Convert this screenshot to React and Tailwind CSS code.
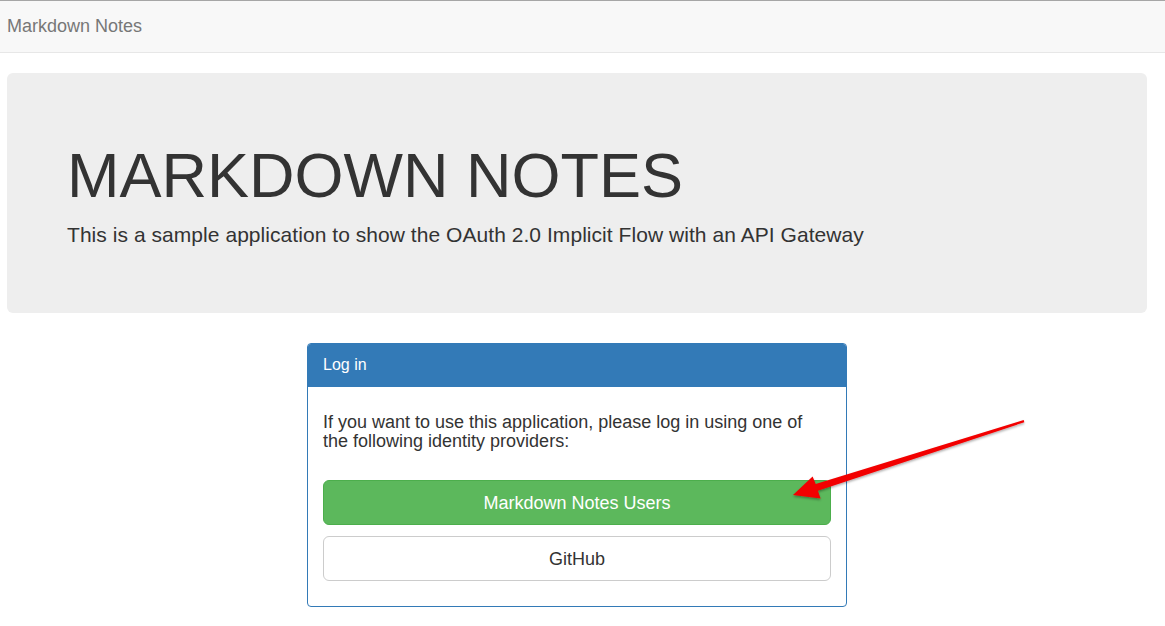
export default function App() {
  return (
    <div
      className="relative w-[1165px] h-[626px] bg-white overflow-hidden text-[#333]"
      style={{ fontFamily: '"Liberation Sans", Arial, sans-serif' }}
    >
      <div className="border-t border-b border-t-[#a6a6a6] border-b-[#e7e7e7] bg-[#f8f8f8] h-[53px]">
        <div className="pl-[7px] pt-[15px] text-[18px] leading-[20px] text-[#777]">Markdown Notes</div>
      </div>

      <div className="ml-[7px] w-[1140px] mt-[20px]">
        <div className="bg-[#eeeeee] rounded-[6px] pt-[48px] pb-[48px] px-[60px]">
          <h1 className="mt-[20px] mb-[10px] text-[63px] leading-[69px] font-normal text-[#333]">MARKDOWN NOTES</h1>
          <p className="mb-[15px] text-[21px] leading-[30px] tracking-[0.05px] text-[#333]">
            This is a sample application to show the OAuth 2.0 Implicit Flow with an API Gateway
          </p>
        </div>

        <div className="mx-auto mt-[30px] w-[540px] border border-[#337ab7] rounded-[4px] bg-white">
          <div className="bg-[#337ab7] border-b border-[#337ab7] px-[15px] py-[10px] text-white text-[16px] leading-[22px] rounded-t-[3px]">
            Log in
          </div>
          <div className="px-[15px] pt-[15px] pb-[25px]">
            <p className="mt-[11px] text-[18px] leading-[19px] text-[#333]">
              If you want to use this application, please log in using one of
              <br />
              the following identity providers:
            </p>
            <button className="mt-[29px] w-full h-[45px] rounded-[6px] bg-[#5cb85c] border border-[#4cae4c] text-white text-[18px] leading-[24px]">
              Markdown Notes Users
            </button>
            <button className="mt-[11px] w-full h-[45px] rounded-[6px] bg-white border border-[#cccccc] text-[#333] text-[18px] leading-[24px]">
              GitHub
            </button>
          </div>
        </div>
      </div>

      <svg
        className="absolute left-0 top-0 pointer-events-none"
        width="1165"
        height="626"
        viewBox="0 0 1165 626"
      >
        <defs>
          <filter id="sh" x="-10%" y="-10%" width="120%" height="140%">
            <feDropShadow dx="0" dy="1.5" stdDeviation="1.2" floodColor="#000" floodOpacity="0.35" />
          </filter>
        </defs>
        <polygon
          filter="url(#sh)"
          fill="#f20000"
          points="1023.7,420 815.7,484.1 812.6,476.4 793,495 820.6,498.4 817.9,490.7 1024.3,422.2"
        />
      </svg>
    </div>
  );
}
